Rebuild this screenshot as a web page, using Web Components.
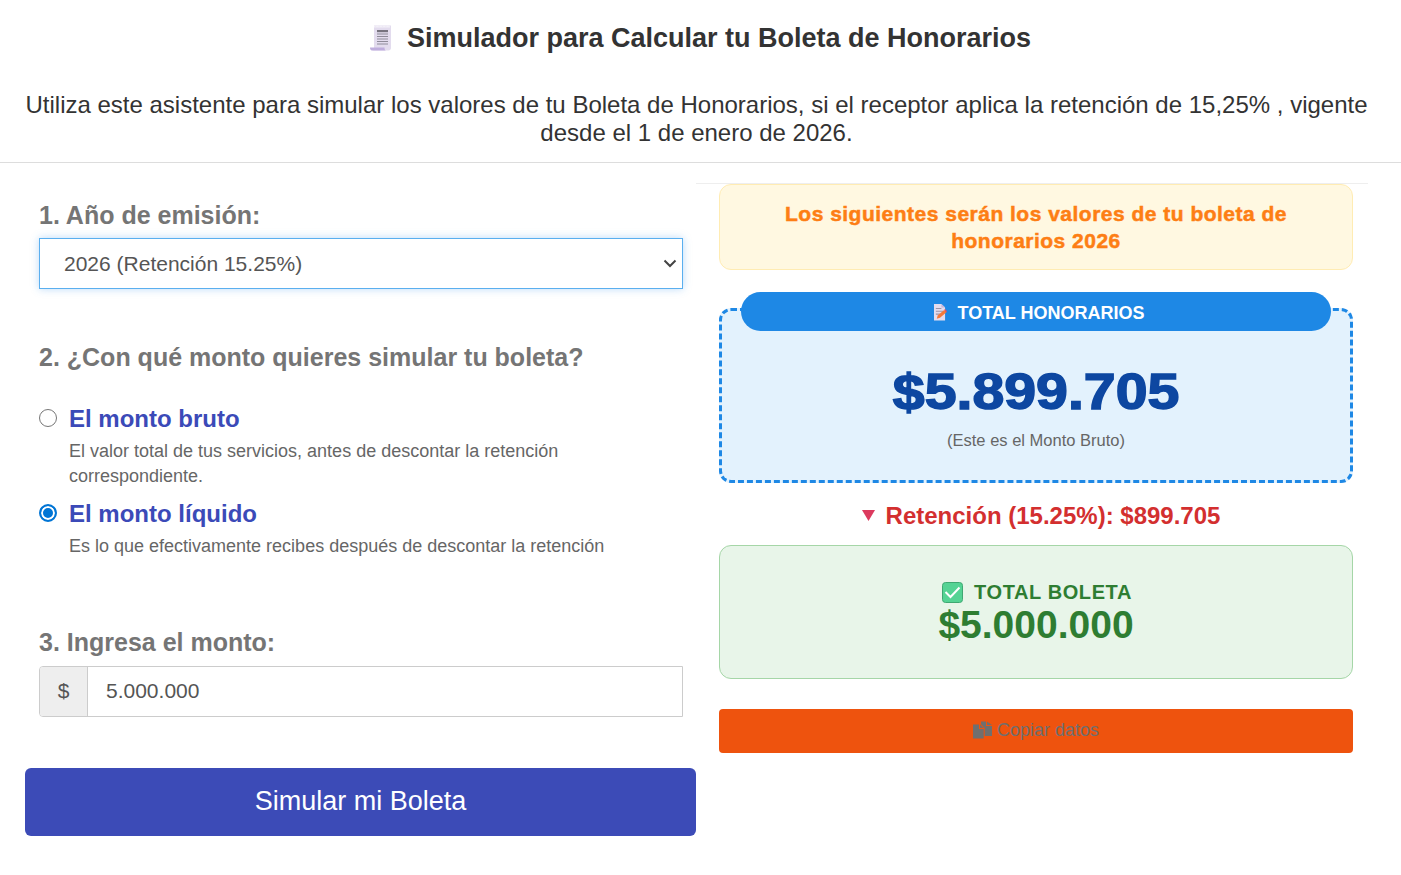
<!DOCTYPE html>
<html lang="es">
<head>
<meta charset="utf-8">
<title>Simulador Boleta de Honorarios</title>
<style>
  html, body { margin: 0; padding: 0; background: #fff; }
  body { font-family: "Liberation Sans", Arial, sans-serif; color: #333; }
</style>
</head>
<body>
<boleta-app></boleta-app>

<script>
// Small helper so every element gets its open shadow root from a template
function defineElement(name, html) {
  const template = document.createElement('template')
  template.innerHTML = html
  customElements.define(name, class extends HTMLElement {
    constructor() {
      super()
      this.attachShadow({ mode: 'open' })
      this.shadowRoot.appendChild(template.content.cloneNode(true))
    }
  })
}

defineElement('page-header', `
  <style>
    :host { display: block; border-bottom: 1px solid #ddd; text-align: center; height: 162px; box-sizing: content-box; }
    h1 { margin: 0; padding: 22px 1px 0 0; height: 32px; font-size: 27px; line-height: 32px; font-weight: bold; color: #333;
         display: flex; justify-content: center; align-items: center; gap: 12px; }
    h1 svg { width: 26px; height: 28px; flex: none; }
    p { margin: 37px 0 0; padding: 0 33px 0 25px; font-size: 24px; line-height: 28px; color: #333; }
  </style>
  <h1>
    <svg viewBox="0 0 26 28">
      <path d="M5 1.500h17v22.500c0 1.600-1 2.500-2.500 2.500H3c1.400 0 2-1 2-2.500z" fill="#e3dcee"/>
      <path d="M5 1.500l1.700 1 1.700-1 1.700 1 1.700-1 1.700 1 1.700-1 1.700 1 1.700-1 1.700 1 .7-1v2H5z" fill="#f3f0f8"/>
      <path d="M1 23.500h14.500c0 1.800.6 3 1.500 3H3c-1.400 0-2-1.400-2-3z" fill="#bfaedd"/>
      <path d="M8 6h11v2.200H8z" fill="#77737f"/>
      <path d="M8 10h11M8 12.500h11M8 15h11M8 17.500h11M8 20h11" stroke="#8f8b99" stroke-width="1.100"/>
    </svg>
    <span>Simulador para Calcular tu Boleta de Honorarios</span>
  </h1>
  <p><slot></slot></p>
`)

defineElement('step-label', `
  <style>
    :host { display: block; font-size: 25px; line-height: 29px; font-weight: bold; color: #757575; }
  </style>
  <slot></slot>
`)

defineElement('year-select', `
  <style>
    :host { display: flex; align-items: center; justify-content: space-between; height: 51px; box-sizing: border-box;
            border: 1px solid #5aafef; background: #fff; padding: 0 5px 0 24px;
            box-shadow: 0 0 8px rgba(60, 150, 235, .35); font-size: 21px; color: #555; }
    svg { width: 14px; height: 9px; fill: none; stroke: #444; stroke-width: 2; }
  </style>
  <span><slot></slot></span>
  <svg viewBox="0 0 14 9"><path d="M1.500 1.500L7 7l5.500-5.500"/></svg>
`)

defineElement('amount-option', `
  <style>
    :host { display: grid; grid-template-columns: 18px 1fr; column-gap: 12px; }
    .dot { width: 18px; height: 18px; box-sizing: border-box; border: 1.500px solid #767676; border-radius: 50%; margin-top: 4px; background: #fff; }
    :host([checked]) .dot { border: 2px solid #0075d5; background: #0075d5; box-shadow: inset 0 0 0 2px #fff; }
    .title { font-size: 24px; line-height: 28px; font-weight: bold; color: #3b4ab8; }
    .text { grid-column: 2; font-size: 18px; line-height: 25px; color: #666; margin-top: 6px; max-width: 560px; }
  </style>
  <div class="dot"></div>
  <div class="title"><slot name="title"></slot></div>
  <div class="text"><slot></slot></div>
`)

defineElement('amount-input', `
  <style>
    :host { display: flex; height: 51px; box-sizing: border-box; border: 1px solid #ccc; border-radius: 4px 0 0 4px; font-size: 21px; color: #555; }
    .prefix { width: 48px; flex: none; box-sizing: border-box; background: #eee; border-right: 1px solid #ccc; border-radius: 3px 0 0 3px;
              display: flex; align-items: center; justify-content: center; padding-bottom: 2px; }
    .value { flex: 1; display: flex; align-items: center; padding: 0 0 2px 18px; }
  </style>
  <div class="prefix">$</div>
  <div class="value"><slot></slot></div>
`)

defineElement('notice-box', `
  <style>
    :host { display: block; height: 86px; box-sizing: border-box; background: #fff8e1; border: 1px solid #ffecb3; border-radius: 12px;
            padding: 15px 40px 0; text-align: center; font-size: 21px; line-height: 27px; font-weight: bold; color: #fd7e14;
            letter-spacing: .49px; -webkit-text-stroke: .5px #fd7e14; }
  </style>
  <slot></slot>
`)

defineElement('gross-card', `
  <style>
    :host { display: block; position: relative; height: 175px; box-sizing: border-box; background: #e3f2fd; border: 3px dashed #1e88e5;
            border-radius: 12px; text-align: center; padding-top: 52px; }
    .pill { position: absolute; top: -19px; left: 19px; right: 19px; height: 39px; background: #1e88e5; border-radius: 20px; color: #fff;
            display: flex; align-items: center; justify-content: center; gap: 9px; padding: 3px 0 0 5px; box-sizing: border-box; font-size: 18px; font-weight: bold; }
    .pill svg { width: 16px; height: 18px; margin-top: -2px; }
    .amount { font-size: 50px; line-height: 58px; font-weight: bold; color: #0d47a1; -webkit-text-stroke: 1.500px #0d47a1; }
    .amount span { display: inline-block; transform: scaleX(1.145); }
    .note { margin-top: 9px; font-size: 16.500px; line-height: 20px; color: #666; }
  </style>
  <div class="pill">
    <svg viewBox="2 0 15 19.500">
      <path d="M3 1h8l4 4v14H3z" fill="#e4dcee"/>
      <path d="M11 1l4 4h-4z" fill="#c4b6dc"/>
      <path d="M5 6h6M5 9h8M5 12h5" stroke="#9a93a8" stroke-width="1.200"/>
      <path d="M6 17l1-3.500 7-6 2.500 2.500-7 6z" fill="#f5793a"/>
      <path d="M14 7.500l2.500 2.500 .5-1-2-2.500z" fill="#f44a55"/>
    </svg>
    <span><slot name="title"></slot></span>
  </div>
  <div class="amount"><span><slot name="amount"></slot></span></div>
  <div class="note"><slot></slot></div>
`)

defineElement('retention-line', `
  <style>
    :host { display: flex; justify-content: center; align-items: center; gap: 11px; height: 30px; padding-left: 10px; font-size: 24px; font-weight: bold; color: #d32f2f; }
    svg { width: 13px; height: 11px; margin-top: -2px; }
  </style>
  <svg viewBox="0 0 13 11"><path d="M0 0h13L6.500 11z" fill="#dc3a5e"/></svg>
  <span><slot></slot></span>
`)

defineElement('net-card', `
  <style>
    :host { display: block; height: 134px; box-sizing: border-box; background: #e8f5e9; border: 1px solid #a5d6a7; border-radius: 12px;
            text-align: center; padding-top: 33px; color: #2e7d32; font-weight: bold; }
    .title { display: flex; justify-content: center; align-items: center; gap: 11px; padding-left: 2px; font-size: 20px; line-height: 26px; letter-spacing: .6px; }
    .title svg { width: 21px; height: 21px; }
    .amount { font-size: 39px; line-height: 40px; }
  </style>
  <div class="title">
    <svg viewBox="0 0 21 21">
      <rect x=".5" y=".5" width="20" height="20" rx="3" fill="#55d394" stroke="#3fa872"/>
      <path d="M3.500 10l5 5 9-9.500" fill="none" stroke="#fff" stroke-width="2"/>
    </svg>
    <span><slot name="title"></slot></span>
  </div>
  <div class="amount"><slot name="amount"></slot></div>
`)

defineElement('copy-button', `
  <style>
    :host { display: flex; justify-content: center; align-items: center; gap: 5px; height: 44px; padding-bottom: 2px; box-sizing: border-box; background: #ee530e; border-radius: 4px;
            color: #6f6f6f; font-size: 18px; }
    svg { width: 19px; height: 18px; fill: #6f6f6f; }
  </style>
  <svg viewBox="0 0 19 18">
    <path d="M0 3.500h6V8h4.700v9.500H0z"/>
    <path d="M7 3.500L10.700 7H7z"/>
    <path d="M8 .5h5V5h6v10h-7.300V7L8 3.200z"/>
    <path d="M14 .5l5 3.500h-5z"/>
  </svg>
  <span><slot></slot></span>
`)

defineElement('simulate-button', `
  <style>
    :host { display: flex; justify-content: center; align-items: center; height: 68px; box-sizing: border-box; padding-bottom: 2px; background: #3c4bb7; border-radius: 6px;
            color: #fff; font-size: 27px; }
  </style>
  <slot></slot>
`)

defineElement('boleta-app', `
  <style>
    :host { display: block; }
    main { display: grid; grid-template-columns: 671px 672px; margin: 0 33px 0 25px; }
    .left { padding-top: 38px; display: flex; flex-direction: column; }
    .row { padding: 0 13px 0 14px; }
    .right { margin-top: 20px; border-top: 1px solid #eee; padding: 0 15px 0 23px; }
    .options { display: flex; flex-direction: column; gap: 11px; margin-top: 33px; }
  </style>
  <page-header>Utiliza este asistente para simular los valores de tu Boleta de Honorarios, si el receptor aplica la retención de 15,25% , vigente desde el 1 de enero de 2026.</page-header>
  <main>
    <section class="left">
      <div class="row">
        <step-label>1. Año de emisión:</step-label>
        <year-select style="margin-top:8px">2026 (Retención 15.25%)</year-select>
        <step-label style="margin-top:54px">2. ¿Con qué monto quieres simular tu boleta?</step-label>
        <div class="options">
          <amount-option>
            <span slot="title">El monto bruto</span>
            El valor total de tus servicios, antes de descontar la retención correspondiente.
          </amount-option>
          <amount-option checked>
            <span slot="title">El monto líquido</span>
            Es lo que efectivamente recibes después de descontar la retención
          </amount-option>
        </div>
        <step-label style="margin-top:69px">3. Ingresa el monto:</step-label>
        <amount-input style="margin-top:9px">5.000.000</amount-input>
      </div>
      <simulate-button style="margin-top:51px">Simular mi Boleta</simulate-button>
    </section>
    <section class="right">
      <notice-box>Los siguientes serán los valores de tu boleta de honorarios 2026</notice-box>
      <gross-card style="margin-top:38px">
        <span slot="title">TOTAL HONORARIOS</span>
        <span slot="amount">$5.899.705</span>
        (Este es el Monto Bruto)
      </gross-card>
      <retention-line style="margin-top:18px">Retención (15.25%): $899.705</retention-line>
      <net-card style="margin-top:14px">
        <span slot="title">TOTAL BOLETA</span>
        <span slot="amount">$5.000.000</span>
      </net-card>
      <copy-button style="margin-top:30px">Copiar datos</copy-button>
    </section>
  </main>
`)
</script>
</body>
</html>
